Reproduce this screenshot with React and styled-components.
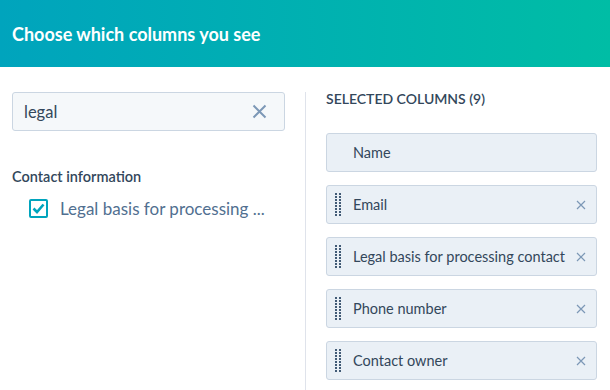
import React from "react"
import styled, { createGlobalStyle } from "styled-components"

const GlobalStyle = createGlobalStyle`
  html, body {
    margin: 0;
    padding: 0;
    background: #fff;
    font-family: Lato, "Noto Sans", sans-serif;
    color: #33475b;
  }
`

const Modal = styled.div`
  width: 610px;
  height: 390px;
  overflow: hidden;
  display: flex;
  flex-direction: column;
`

const Header = styled.div`
  height: 67px;
  flex: none;
  display: flex;
  align-items: center;
  padding: 0 12px;
  background: linear-gradient(90deg, #00a4bd 0%, #00bda5 100%);
`

const Title = styled.h1`
  margin: 0;
  font-size: 18px;
  font-weight: 700;
  color: #fff;
`

const Body = styled.div`
  flex: 1;
  display: grid;
  grid-template-columns: 306px minmax(0, 1fr);
  padding-top: 25px;
`

const LeftPane = styled.div`
  padding: 0 20px 0 12px;
  border-right: 1px solid #dfe3eb;
`

const Search = styled.div`
  height: 39px;
  box-sizing: border-box;
  display: flex;
  align-items: center;
  justify-content: space-between;
  padding: 0 17px 0 11px;
  background: #f5f8fa;
  border: 1px solid #cbd6e2;
  border-radius: 3px;
  font-size: 16.5px;
  color: #33475b;
`

const GroupLabel = styled.div`
  margin-top: 37px;
  font-size: 14.5px;
  font-weight: 600;
  color: #33475b;
`

const Option = styled.label`
  display: flex;
  align-items: center;
  gap: 12px;
  margin-top: 13px;
  padding-left: 17px;
  font-size: 17px;
  color: #516f90;
  white-space: nowrap;
`

const Box = styled.span`
  width: 19px;
  height: 19px;
  box-sizing: border-box;
  border: 2px solid #00a4bd;
  border-radius: 2px;
  display: flex;
  align-items: center;
  justify-content: center;
  flex: none;
`

const RightPane = styled.div`
  padding: 0 13px 0 20px;
`

const Heading = styled.div`
  font-size: 14px;
  font-weight: 600;
  color: #33475b;
  margin-top: -2px;
  margin-bottom: 26px;
`

const List = styled.div`
  display: flex;
  flex-direction: column;
  gap: 13px;
`

const Card = styled.div`
  height: 39px;
  box-sizing: border-box;
  display: flex;
  align-items: center;
  padding: 0 10px 0 ${p => (p.$fixed ? "26px" : "8px")};
  background: #eaf0f6;
  border: 1px solid #cbd6e2;
  border-radius: 3px;
  font-size: 14.5px;
  color: #33475b;
`

const HandleIcon = styled.svg`
  flex: none;
  margin-right: 12px;
`

const CardText = styled.span`
  flex: 1;
  min-width: 0;
  overflow: hidden;
  white-space: nowrap;
`

const Remove = styled.span`
  flex: none;
  width: 10px;
  height: 10px;
  margin-left: 6px;
  display: flex;
`

const Cross = ({ size, width, color }) => (
  <svg width={size} height={size} viewBox="0 0 10 10">
    <path d="M1 1L9 9M9 1L1 9" stroke={color} strokeWidth={width} />
  </svg>
)

const Handle = () => (
  <HandleIcon width="6" height="23" viewBox="0 0 6 23">
    {Array.from({ length: 8 }).map((_, i) => (
      <g key={i} fill="#425b76">
        <rect x="0" y={i * 3} width="2" height="2" />
        <rect x="4" y={i * 3} width="2" height="2" />
      </g>
    ))}
  </HandleIcon>
)

const columns = ["Email", "Legal basis for processing contact", "Phone number", "Contact owner"]

export default function App() {
  return (
    <Modal>
      <GlobalStyle />
      <Header>
        <Title>Choose which columns you see</Title>
      </Header>
      <Body>
        <LeftPane>
          <Search>
            <span>legal</span>
            <Cross size={15} width={1.3} color="#7c98b6" />
          </Search>
          <GroupLabel>Contact information</GroupLabel>
          <Option>
            <Box>
              <svg width="13" height="11" viewBox="0 0 13 11">
                <path d="M1.5 5.5L5 9L11.5 1.5" fill="none" stroke="#00a4bd" strokeWidth="2.6" />
              </svg>
            </Box>
            Legal basis for processing ...
          </Option>
        </LeftPane>
        <RightPane>
          <Heading>SELECTED COLUMNS (9)</Heading>
          <List>
            <Card $fixed>
              <CardText>Name</CardText>
            </Card>
            {columns.map(c => (
              <Card key={c}>
                <Handle />
                <CardText>{c}</CardText>
                <Remove>
                  <Cross size={10} width={1.2} color="#7c98b6" />
                </Remove>
              </Card>
            ))}
          </List>
        </RightPane>
      </Body>
    </Modal>
  )
}
